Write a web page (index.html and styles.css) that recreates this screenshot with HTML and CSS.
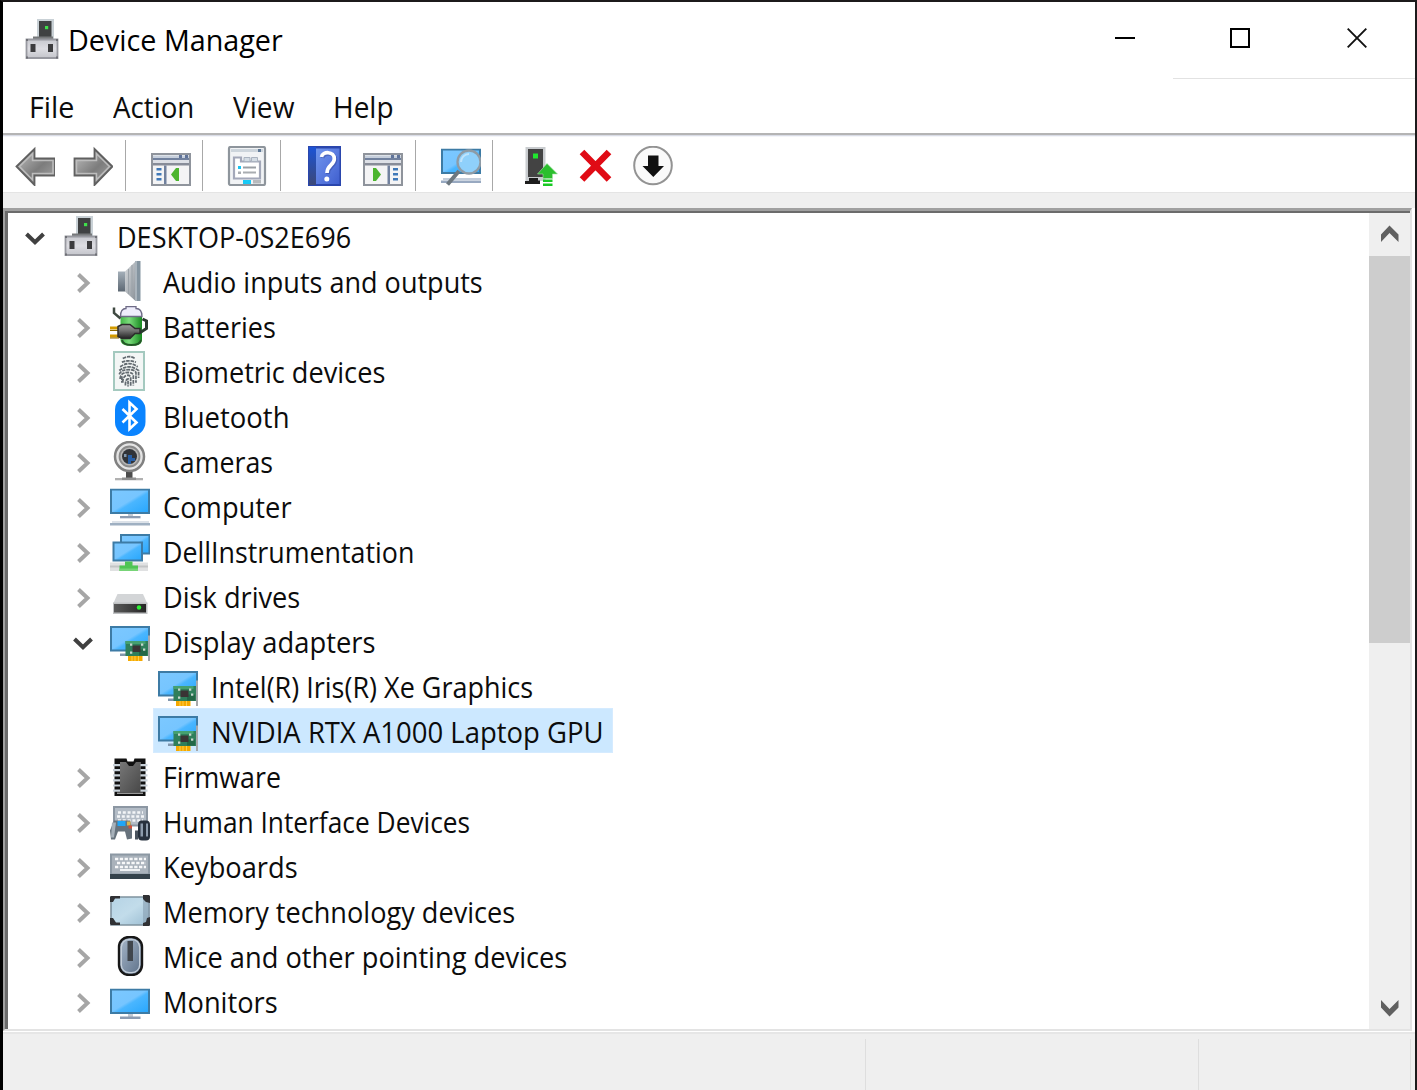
FILE: index.html
```html
<!DOCTYPE html>
<html lang="en">
<head>
<meta charset="utf-8">
<title>Device Manager</title>
<link rel="stylesheet" href="styles.css">
</head>
<body>
<svg class="defs" width="0" height="0" aria-hidden="true">
  <defs>
    <linearGradient id="screen" x1="0" y1="0" x2="1" y2="1">
      <stop offset="0" stop-color="#7cc8ff"/><stop offset=".48" stop-color="#76c5ff"/>
      <stop offset=".56" stop-color="#4ab6ff"/><stop offset="1" stop-color="#27a6fd"/>
    </linearGradient>
    <linearGradient id="silver" x1="0" y1="0" x2="0" y2="1">
      <stop offset="0" stop-color="#c8c9cf"/><stop offset=".5" stop-color="#dddde2"/><stop offset="1" stop-color="#c4c5cb"/>
    </linearGradient>
    <linearGradient id="arrow" x1="0" y1="0" x2="1" y2="1">
      <stop offset="0" stop-color="#c4c4c4"/><stop offset=".55" stop-color="#7c7c7c"/><stop offset="1" stop-color="#a8a8a8"/>
    </linearGradient>
    <linearGradient id="help" x1="0" y1="0" x2="1" y2="1">
      <stop offset="0" stop-color="#6f95ec"/><stop offset=".5" stop-color="#5a7be0"/><stop offset="1" stop-color="#3f5fce"/>
    </linearGradient>
    <linearGradient id="spine" x1="0" y1="0" x2="0" y2="1">
      <stop offset="0" stop-color="#1c53d6"/><stop offset="1" stop-color="#3c4877"/>
    </linearGradient>
    <linearGradient id="cone" x1="0" y1="0" x2="1" y2="1">
      <stop offset="0" stop-color="#d7dadd"/><stop offset="1" stop-color="#8d949b"/>
    </linearGradient>
    <linearGradient id="steel" x1="0" y1="0" x2="0" y2="1">
      <stop offset="0" stop-color="#a4afb9"/><stop offset="1" stop-color="#5d6873"/>
    </linearGradient>
    <linearGradient id="green" x1="0" y1="0" x2="1" y2="0">
      <stop offset="0" stop-color="#44b749"/><stop offset=".4" stop-color="#7bdc7b"/><stop offset="1" stop-color="#178a20"/>
    </linearGradient>
    <linearGradient id="plug" x1="0" y1="0" x2="0" y2="1">
      <stop offset="0" stop-color="#9a9a9a"/><stop offset=".4" stop-color="#777"/><stop offset="1" stop-color="#222"/>
    </linearGradient>
    <linearGradient id="chip" x1="0" y1="0" x2="1" y2="1">
      <stop offset="0" stop-color="#777"/><stop offset="1" stop-color="#484848"/>
    </linearGradient>
    <linearGradient id="glass" x1="0" y1="0" x2="1" y2="1">
      <stop offset="0" stop-color="#b5d3e5"/><stop offset=".5" stop-color="#c2dcea"/><stop offset="1" stop-color="#9bbdd2"/>
    </linearGradient>
    <linearGradient id="mouse" x1="0" y1="0" x2="1" y2="1">
      <stop offset="0" stop-color="#a9b9cc"/><stop offset="1" stop-color="#5b6f87"/>
    </linearGradient>
    <linearGradient id="disk" x1="0" y1="0" x2="1" y2="0">
      <stop offset="0" stop-color="#595959"/><stop offset="1" stop-color="#262626"/>
    </linearGradient>
    <symbol id="i-device" viewBox="0 0 40 40">
      <path d="M15 0h17v20H15z" fill="#c9d1d6"/><path d="M17 2h12.500v17H17z" fill="#3f4142"/>
      <path d="M11 17.500h20v3H11z" fill="#76787a"/>
      <path d="M23 7h3.200v3.200H23z" fill="#3fe04a"/>
      <path d="M4.500 20.500h31v18.500h-31z" fill="url(#silver)" stroke="#9899a0" stroke-width="1.800"/>
      <path d="M4 20h2v2H4zM34 20h2v2h-2zM4 37.500h2v2H4zM34 37.500h2v2h-2z" fill="#6f7076"/>
      <path d="M8.500 25h5v8h-5zM26 25h5v8h-5z" fill="#3c3c3e"/>
    </symbol>
    <symbol id="i-screen" viewBox="0 0 40 26">
      <path d="M1 1h38v23.500H1z" fill="url(#screen)" stroke="#3d7ba5" stroke-width="2"/>
    </symbol>
    <symbol id="i-monitor" viewBox="0 0 40 40">
      <use href="#i-screen" width="40" height="26" y="7.500"/>
      <path d="M18 33h5v3h-5z" fill="#c3cad4"/><path d="M10 35.500h20.500v2.500H10z" fill="#8c9cb2"/>
    </symbol>
    <symbol id="i-adapter" viewBox="0 0 40 40">
      <g transform="translate(0 4.500)">
        <use href="#i-screen" width="40" height="26" y="0.500"/>
        <path d="M10 28h8v2.500h-8z" fill="#8197ae"/>
        <path d="M15.500 15.500h23v15h-23z" fill="#2f7f5b"/><path d="M15.500 15.500h20v3h-20z" fill="#45a070"/><path d="M29 24h8v6h-8z" fill="#236747"/>
        <path d="M22.500 20h8v6.500h-8z" fill="#3a3434"/>
        <path d="M20 18h2.300v2.300H20zM31 18h2.300v2.300H31zM20 26h2.300v2.300H20zM33 23h2.300v2.300H33z" fill="#c5d6cd"/>
        <path d="M38 10h2.300v25.500H38z" fill="#a6a8ab"/>
        <path d="M18 30.500h14.500v5H18z" fill="#f5a900"/><path d="M22 30.500v5M25 30.500v5M28.500 30.500v5" stroke="#ffce4a"/>
      </g>
    </symbol>
    <symbol id="i-right" viewBox="0 0 20 24"><path d="M5.500 3.500 14.500 12 5.500 20.500" fill="none" stroke="#a6a6a6" stroke-width="4"/></symbol>
    <symbol id="i-down" viewBox="0 0 20 24"><path d="M1.500 8 10 16.300 18.500 8" fill="none" stroke="#404040" stroke-width="4"/></symbol>
    <symbol id="i-window" viewBox="0 0 40 40">
      <path d="M1 8h38v31H1z" fill="#f4f4f5" stroke="#8f949c" stroke-width="2"/>
      <path d="M2 9.500h36v2.500H2z" fill="#c6cfdc"/><path d="M2 12h36v2H2z" fill="#71819e"/><path d="M2 14h36v3H2z" fill="#dde0e6"/><path d="M2 17h36v2.500H2z" fill="#878c98"/>
      <path d="M28 9h3v3h-3zM34 9h3v3h-3z" fill="#60749a"/>
    </symbol>
  </defs>
</svg>

<div class="window">
  <header class="titlebar">
    <svg class="icon title-icon"><use href="#i-device"/></svg>
    <h1 class="title fit" style="--fit:.98">Device Manager</h1>
    <div class="controls">
      <svg class="control" viewBox="0 0 20 20"><path d="M0 10h20" stroke="#000" stroke-width="2"/></svg>
      <svg class="control" viewBox="0 0 20 20"><path d="M1 1h18v18H1z" fill="none" stroke="#000" stroke-width="2"/></svg>
      <svg class="control" viewBox="0 0 20 20"><path d="M.7.700 19.300 19.300M19.300.700.700 19.300" stroke="#111" stroke-width="1.900"/></svg>
    </div>
  </header>
  <div class="caption-line"></div>

  <nav class="menu">
    <span class="menu-item file fit" style="--fit:.98">File</span>
    <span class="menu-item action fit" style="--fit:.945">Action</span>
    <span class="menu-item view fit" style="--fit:.96">View</span>
    <span class="menu-item fit" style="--fit:.955">Help</span>
  </nav>

  <div class="toolbar">
    <div class="group nav-group">
      <svg class="icon" viewBox="0 0 40 40"><path d="M1.500 20.500 19.500 3v9.500H40v17H19.500V39z" fill="url(#arrow)" stroke="#606060" stroke-width="1.800"/><path d="M4.500 20.500 17.500 7.800V14.500h20.500v13H17.500v6.200z" fill="none" stroke="#bdbdbd" stroke-width="1.500"/></svg>
      <svg class="icon" viewBox="0 0 40 40"><path d="M39.500 20.500 21.500 3v9.500H1.500v17h20V39z" fill="url(#arrow)" stroke="#606060" stroke-width="1.800"/><path d="M36.500 20.500 23.500 7.800V14.500h-20v13h20v6.200z" fill="none" stroke="#bdbdbd" stroke-width="1.500"/></svg>
    </div>
    <div class="group tree-group">
      <svg class="icon" viewBox="0 0 40 40"><use href="#i-window" width="40" height="40"/><path d="M13 19.500h2.500V38H13z" fill="#71819e"/><path d="M5.500 22h5v2.500h-5zM5.500 27h5v2.500h-5zM5.500 32h5v2.500h-5z" fill="#3f78b8"/><path d="M28 22v13h-3l-5-6.500 5-6.500z" fill="#4cb52e"/></svg>
    </div>
    <div class="group props-group">
      <svg class="icon" viewBox="0 0 40 40"><rect x="2" y="1" width="36" height="38" rx="1.500" fill="#f1f3f5" stroke="#8e959c" stroke-width="2.200"/><path d="M4 3h32v3H4z" fill="#cdd5dc"/><path d="M31 3h3v3h-3z" fill="#5f7997"/><path d="M7 11.500h7v4h19v17H7z" fill="#fff" stroke="#a3a8b9" stroke-width="2.200"/><path d="M17 11.500h6v4h-6zM24.500 11.500h6v4h-6z" fill="#d4dce4" stroke="#aab3c0"/><path d="M11 20h3v3h-3z" fill="#19c4f2"/><path d="M16 20.500h13v2H16z" fill="#9a9fa5"/><path d="M11 25.500h3v2.500h-3zM16 25.500h13v2H16z" fill="#a9adb1"/><path d="M16 34h8v4h-8z" fill="#18caf7"/><path d="M26 34h8v3.500h-8z" fill="#b7babd"/></svg>
    </div>
    <div class="group help-group">
      <svg class="icon" viewBox="0 0 40 40"><path d="M4 0h33v40H4z" fill="#2a46ad"/><path d="M5 1h7v38H5z" fill="url(#spine)"/><path d="M12 2.500h23.500V38H12z" fill="url(#help)"/><path d="M18.500 12c1-6 13-6 12.800 2 0 6-7.300 6-7.300 14" fill="none" stroke="#34489c" stroke-width="4" opacity=".5"/><path d="M17.500 11c1-6 13-6 12.800 2 0 6-7.300 6-7.300 14" fill="none" stroke="#fff" stroke-width="3.700"/><circle cx="22.800" cy="33" r="2.500" fill="#fff"/></svg>
      <svg class="icon" viewBox="0 0 40 40"><use href="#i-window" width="40" height="40"/><path d="M24.500 19.500H27V38h-2.500z" fill="#71819e"/><path d="M30 22h5v2.500h-5zM30 27h5v2.500h-5zM30 32h5v2.500h-5z" fill="#3f78b8"/><path d="M10 22v13h3l5-6.500-5-6.500z" fill="#4cb52e"/></svg>
    </div>
    <div class="group scan-group">
      <svg class="icon" viewBox="0 0 40 40"><use href="#i-screen" width="40" height="26" y="2.500"/><path d="M2 32h38v2H2z" fill="#c4cedb"/><path d="M0 34.500h40V37H0z" fill="#98a9c1"/><path d="M18 25 6.500 38.500" stroke="#6d7880" stroke-width="4"/><circle cx="28" cy="16" r="11.500" fill="#8fd0fb" stroke="#8e9ba6" stroke-width="2.300"/><path d="M20 16a8 8 0 0 1 8-8" fill="none" stroke="#bfe4fd" stroke-width="2"/></svg>
    </div>
    <div class="group action-group">
      <svg class="icon" viewBox="0 0 40 40"><path d="M7.500 1h20v34h-20z" fill="#c9cccf"/><path d="M10 3h15v28H10z" fill="#434343"/><path d="M15 7.500h5v5h-5z" fill="#1fe62e"/><path d="M11 32h9v2.500H22V38H7v-3h4z" fill="#1d1d1d"/><path d="M29 17.500 39.500 28h-5v4.500H25V28h-5.500z" fill="#2bbf2e" stroke="#a9dfab" stroke-width=".6"/><path d="M25 33.500h9.500V36H25zM25 37.500h9.500V40H25z" fill="#18c922"/></svg>
      <svg class="icon" viewBox="0 0 40 40"><path d="M7 6 34 33.500M34 6 7 33.500" stroke="#e00b15" stroke-width="6.500"/></svg>
      <svg class="icon" viewBox="0 0 40 40"><circle cx="20" cy="19.500" r="18.800" fill="#fafafa" stroke="#939393" stroke-width="2"/><path d="M15 9.500h10.500v10.500H31L20.300 31 9.500 20H15z" fill="#111"/></svg>
    </div>
  </div>
  <div class="band"></div>

  <main class="pane">
    <div class="tree">
      <div class="row root"><svg class="expander"><use href="#i-down"/></svg><div class="node"><svg class="icon"><use href="#i-device"/></svg><span class="label fit" style="--fit:.923">DESKTOP-0S2E696</span></div></div>
      <div class="row child"><svg class="expander"><use href="#i-right"/></svg><div class="node"><svg class="icon" viewBox="0 0 40 40"><path d="M8 10.500h7v20H8z" fill="url(#steel)"/><path d="M15 10.500 25 1v38.500L15 30.500z" fill="url(#cone)"/><path d="M18.500 8v25M22 4v32" stroke="#9ba2a8"/><path d="M25 0h5.500v40H25z" fill="#8494a0"/><path d="M25 0h2v40h-2z" fill="#aab4bc"/></svg><span class="label fit" style="--fit:.923">Audio inputs and outputs</span></div></div>
      <div class="row child"><svg class="expander"><use href="#i-right"/></svg><div class="node"><svg class="icon" viewBox="0 0 40 40"><rect x="10.500" y="3" width="21.500" height="36.500" rx="6" fill="url(#green)"/><path d="M10.500 10.500q0-8 5.500-8V.5h10V2.500q6 0 6 8z" fill="#eeedfb" stroke="#6e6b86" stroke-width="1.300"/><path d="M12 34q1 5 9.500 5t9.500-5" fill="none" stroke="#225826" stroke-width="2"/><path d="M4 1.500v5.500l6.500 5.500" fill="none" stroke="#3f4941" stroke-width="2.500"/><path d="M24 26h7l5.500-3.500v-7.500l-4-2" fill="none" stroke="#2b3b30" stroke-width="3"/><path d="M0 20.500h9v3H0zM0 28.500h9v3H0z" fill="#d49b00"/><path d="M0 24h9v1H0zM0 31.500h9v1H0z" fill="#8d6900"/><path d="M8 20.500 12 18.500h8l5 4h5v5h-5l-5 5h-8l-4-2z" fill="url(#plug)" stroke="#2c2c2c" stroke-width="1.500"/></svg><span class="label fit" style="--fit:.922">Batteries</span></div></div>
      <div class="row child"><svg class="expander"><use href="#i-right"/></svg><div class="node"><svg class="icon" viewBox="0 0 40 40"><path d="M4 1h30v38H4z" fill="#f3f6f5" stroke="#a4c9bf" stroke-width="2"/><g fill="none" stroke="#626a70" stroke-width="2" stroke-dasharray="4 1" transform="translate(2.200 1) scale(.88 .93)"><path d="M12 7q7-4 14 0M11 11q8-3 16 0M9 16q10-7 20 0M8 20q11-8 22 0v8M8 24q2-5 11-5t8 5v9M9 29q0-7 9-7 6 0 6 4v10M12 33q0-8 6-8 3 0 3 4v8M15 36q0-7 3-7v8M11 26v7"/></g></svg><span class="label fit" style="--fit:.927">Biometric devices</span></div></div>
      <div class="row child"><svg class="expander"><use href="#i-right"/></svg><div class="node"><svg class="icon" viewBox="0 0 40 40"><rect x="5" y="0" width="30.500" height="40" rx="14" fill="#0a84ff"/><path d="m12.500 13 14 13.500-7 6.500V6.500l7 6.500-14 13.500" fill="none" stroke="#fff" stroke-width="2.600"/></svg><span class="label fit" style="--fit:.938">Bluetooth</span></div></div>
      <div class="row child"><svg class="expander"><use href="#i-right"/></svg><div class="node"><svg class="icon" viewBox="0 0 40 40"><path d="M16 30h6.500v7H16z" fill="#4d4d4d"/><path d="M5 37h28v2.300H5z" fill="#b1b1b1"/><path d="M12 36.500h14V39H12z" fill="#8f8f8f"/><circle cx="19.500" cy="15.500" r="14.500" fill="#e4e4e4" stroke="#818181" stroke-width="2.500"/><circle cx="19.500" cy="15.500" r="10" fill="#b5b5b5" stroke="#8a8a8a" stroke-width="1.800"/><circle cx="19.500" cy="15.500" r="7.500" fill="#303338"/><path d="M18 14h4v3h3v3h-4v3h-3z" fill="#275ea5"/><path d="M14 13h2.500v3H14z" fill="#8197ac"/></svg><span class="label fit" style="--fit:.913">Cameras</span></div></div>
      <div class="row child"><svg class="expander"><use href="#i-right"/></svg><div class="node"><svg class="icon" viewBox="0 0 40 40"><use href="#i-screen" width="40" height="26" y="2.500"/><path d="M18 28h5v2h-5z" fill="#c3cad4"/><path d="M10 30h20.500v2.300H10z" fill="#8c9cb2"/><path d="M2 35h37v2H2z" fill="#dce2e9"/><path d="M0 37h40v2.500H0z" fill="#9fb0c2"/></svg><span class="label fit" style="--fit:.932">Computer</span></div></div>
      <div class="row child"><svg class="expander"><use href="#i-right"/></svg><div class="node"><svg class="icon" viewBox="0 0 40 40"><path d="M11 4h28.500v18.500H11z" fill="url(#screen)" stroke="#3d7ba5" stroke-width="2"/><path d="M3.500 11.500H32v18H3.500z" fill="url(#screen)" stroke="#3d7ba5" stroke-width="2"/><path d="M0 31.500h38v8.500H0z" fill="#e0e1e2"/><path d="M0 34.500h38v2H0z" fill="#c3c5c6"/><path d="M15 30.500h7.500v4H28V40H9.500v-5.500H15z" fill="#4fc553"/><path d="M9.500 37.500H28V40H9.500z" fill="#77d477"/></svg><span class="label fit" style="--fit:.915">DellInstrumentation</span></div></div>
      <div class="row child"><svg class="expander"><use href="#i-right"/></svg><div class="node"><svg class="icon" viewBox="0 0 40 40"><path d="M7.500 18h25.500l4.500 10H3z" fill="#d3d5d7"/><path d="M3 26.500h34.500V38H3z" fill="#bfc1c3"/><path d="M4 28h32v8.500H4z" fill="url(#disk)"/><circle cx="29" cy="31.500" r="2.200" fill="#2cf034"/></svg><span class="label fit" style="--fit:.928">Disk drives</span></div></div>
      <div class="row child"><svg class="expander"><use href="#i-down"/></svg><div class="node"><svg class="icon"><use href="#i-adapter"/></svg><span class="label fit" style="--fit:.933">Display adapters</span></div></div>
      <div class="row leaf"><div class="node"><svg class="icon"><use href="#i-adapter"/></svg><span class="label fit" style="--fit:.921">Intel(R) Iris(R) Xe Graphics</span></div></div>
      <div class="row leaf"><div class="node selected"><svg class="icon"><use href="#i-adapter"/></svg><span class="label fit" style="--fit:.938">NVIDIA RTX A1000 Laptop GPU</span></div></div>
      <div class="row child"><svg class="expander"><use href="#i-right"/></svg><div class="node"><svg class="icon" viewBox="0 0 40 40"><path d="M4.500 2.500h12l1 3h6l1-3h11V40h-31z" fill="#111"/><path d="M10 6h6l3 4h4l3-4h5v30H10z" fill="url(#chip)"/><path d="M7 36.500h26V38H7z" fill="#999"/><path d="M6.500 8v28M34 8v28" stroke="#c9d2da" stroke-width="7" stroke-dasharray="2.200 2.900"/></svg><span class="label fit" style="--fit:.914">Firmware</span></div></div>
      <div class="row child"><svg class="expander"><use href="#i-right"/></svg><div class="node"><svg class="icon" viewBox="0 0 40 40"><g transform="translate(0 4.500)"><path d="M4 1.500h33V20H4z" fill="#b3bcc6" stroke="#8c97a3" stroke-width="2"/><path d="M8 7h25M7 11h27M8 15h25" stroke="#f3f5f7" stroke-width="2.300" stroke-dasharray="3 1.800"/><path d="M4 15h16l2 8v10l-5 1-2-8h-7l-3 8H1l-1-9z" fill="#67727c"/><path d="M2 17h4l-2 15H1z" fill="#a7b1ba"/><path d="M7.500 15.500h8v5h-8z" fill="#21a5f5"/><path d="M17 16h3.500v4H17z" fill="#d8b64e"/><path d="M18.500 20H22v3h-3.500z" fill="#d74f36"/><rect x="28" y="15" width="12" height="20" rx="4" fill="#27313e"/><path d="M30.500 18H33v13h-2.500zM36 18h2v13h-2z" fill="#8d9cad"/><path d="M25 25h3v9h-3z" fill="#49535e"/></g></svg><span class="label fit" style="--fit:.898">Human Interface Devices</span></div></div>
      <div class="row child"><svg class="expander"><use href="#i-right"/></svg><div class="node"><svg class="icon" viewBox="0 0 40 40"><g transform="translate(0 4.500)"><path d="M1 4h38v20H1z" fill="#a9b2bb" stroke="#8c98a3" stroke-width="2"/><path d="M0 23.500h40v5H0z" fill="#34424b"/><path d="M5 8.500h31M7 12.500h29M5 16.500h31" stroke="#f7f8f9" stroke-width="2.600" stroke-dasharray="3.300 1.500"/><path d="M10 19.500h20" stroke="#f1f3f5" stroke-width="2"/></g></svg><span class="label fit" style="--fit:.93">Keyboards</span></div></div>
      <div class="row child"><svg class="expander"><use href="#i-right"/></svg><div class="node"><svg class="icon" viewBox="0 0 40 40"><g transform="translate(0 4)"><path d="M1 2h38v28H1z" fill="url(#glass)" stroke="#7f929f" stroke-width="1.600"/><path d="M33 2h7v28h-7z" fill="#879eb0" opacity=".6"/><path d="M1 1h9v2.500H5L3 7H0V2zM33 0h6l1 1v7l-4-1-3-3zM0 23h3l3 4.500h4V30H1l-1-1zM40 22v8l-1 1h-6v-3l3-1 1-4z" fill="#303134"/></g></svg><span class="label fit" style="--fit:.926">Memory technology devices</span></div></div>
      <div class="row child"><svg class="expander"><use href="#i-right"/></svg><div class="node"><svg class="icon" viewBox="0 0 40 40"><rect x="9" y="1" width="23" height="38" rx="10" fill="url(#mouse)" stroke="#171717" stroke-width="2.400"/><rect x="11.300" y="3.300" width="18.400" height="33.400" rx="8" fill="none" stroke="#c5cfda" stroke-width="1.300"/><path d="M17.500 5H23v20h-5.500z" fill="#40464d"/></svg><span class="label fit" style="--fit:.93">Mice and other pointing devices</span></div></div>
      <div class="row child"><svg class="expander"><use href="#i-right"/></svg><div class="node"><svg class="icon"><use href="#i-monitor"/></svg><span class="label fit" style="--fit:.93">Monitors</span></div></div>
    </div>
    <div class="scrollbar">
      <svg class="scroll-arrow" viewBox="0 0 41 43"><path d="m12 29v-7.500L20.500 12.500 29.500 21.500V29L20.500 20z" fill="#606060"/></svg>
      <div class="thumb"></div>
      <svg class="scroll-arrow" viewBox="0 0 41 43"><path d="m12 14v7.500l8.500 9 9-9V14l-9 9z" fill="#606060"/></svg>
    </div>
  </main>

  <footer class="status"><div class="cell first"></div><div class="cell second"></div><div class="cell third"></div></footer>
</div>
</body>
</html>
```
FILE: styles.css
```css
* { box-sizing: border-box; }
body { margin: 0; background: #fff; font-family: "Open Sans", "Noto Sans", sans-serif; font-size: 29.3px; color: #0c0c0c; overflow: hidden; }
svg { display: block; flex: none; }
.defs { position: absolute; }
.window { width: 1417px; height: 1090px; display: flex; flex-direction: column; border: solid #1c1a1b; border-width: 2px 2px 0 3px; border-left-color: #000; background: #fff; }
.window > * { flex: none; }
.icon { width: 40px; height: 40px; }
.fit { transform: scaleX(var(--fit)); transform-origin: left; white-space: nowrap; }

.titlebar { height: 76px; display: flex; align-items: flex-start; padding: 17px 48px 0 18.500px; }
.title { margin: 0 0 0 6px; font-size: 29.3px; font-weight: 400; line-height: 43px; color: #000; }
.controls { display: flex; gap: 96px; margin: 9px 0 0 auto; }
.control { width: 20px; height: 20px; }
.control:first-child { margin-right: -1px; }
.control:last-child { margin-left: 1px; }
.caption-line { height: 1px; width: 242px; margin-left: auto; background: #e2e2e2; }

.menu { height: 54px; display: flex; line-height: 57px; padding-left: 25.500px; }
.menu-item { flex: none; }
.menu-item.file { width: 84.500px; }
.menu-item.action { width: 120px; }
.menu-item.view { width: 100px; }

.toolbar { height: 60px; display: flex; border-top: 2px solid #b4b4b4; border-bottom: 1px solid #e4e4e4; box-shadow: inset 0 1px #d9dce6, inset 0 2px #f4f5f9; padding-top: 5px; }
.group { height: 51px; display: flex; padding-top: 5.500px; border-right: 1px solid #a8a8a8; }
.nav-group { width: 123px; padding-left: 12px; gap: 18px; }
.tree-group { width: 77px; padding-left: 24.500px; }
.props-group { width: 78px; padding-left: 24px; }
.help-group { width: 135px; padding-left: 23px; gap: 19px; }
.scan-group { width: 77px; padding-left: 24.500px; }
.action-group { border: 0; padding-left: 25px; gap: 18px; }
.action-group .icon:first-child { margin-right: -1px; }
.band { height: 15px; background: #efefef; }

.pane { height: 823px; width: 1409px; display: flex; border: solid; border-width: 3px 2px 2px 2px; border-color: #a0a0a0 #e3e3e3 #e3e3e3 #a0a0a0; }
.tree { flex: 1; border-left: 3px solid #6b6b6b; border-top: 2px solid #6b6b6b; overflow: hidden; }
.row { height: 45px; display: flex; padding-left: 17px; }
.row.child { padding-left: 65px; }
.row.leaf { padding-left: 145px; }
.expander { width: 20px; height: 24px; margin: 13px 12.500px 0 0; }
.row.root .expander { margin-right: 11.500px; }
.node { height: 45px; display: flex; padding: 2.500px 0 0 4.500px; }
.label { margin-left: 12.500px; line-height: 43px; height: 43px; }
.root .label { margin-left: 15.500px; }
.leaf .label { margin-left: 13.500px; }
.selected { width: 460px; background: #cce8ff; border: 1px solid #d5ebff; padding: 1.500px 0 0 3.500px; }
.scrollbar { width: 41px; background: #efefef; border-top: 2px solid #6b6b6b; display: flex; flex-direction: column; }
.scroll-arrow { width: 41px; height: 43px; }
.thumb { height: 387px; background: #cdcdcd; margin-bottom: auto; }

.status { height: 59px; margin-top: 1px; display: flex; background: #efefef; border-top: 2px solid #e6e6e6; padding-top: 5px; }
.cell { border-right: 1px solid #dedede; }
.first { width: 863px; }
.second { width: 333px; }
.third { width: 212px; }
```
